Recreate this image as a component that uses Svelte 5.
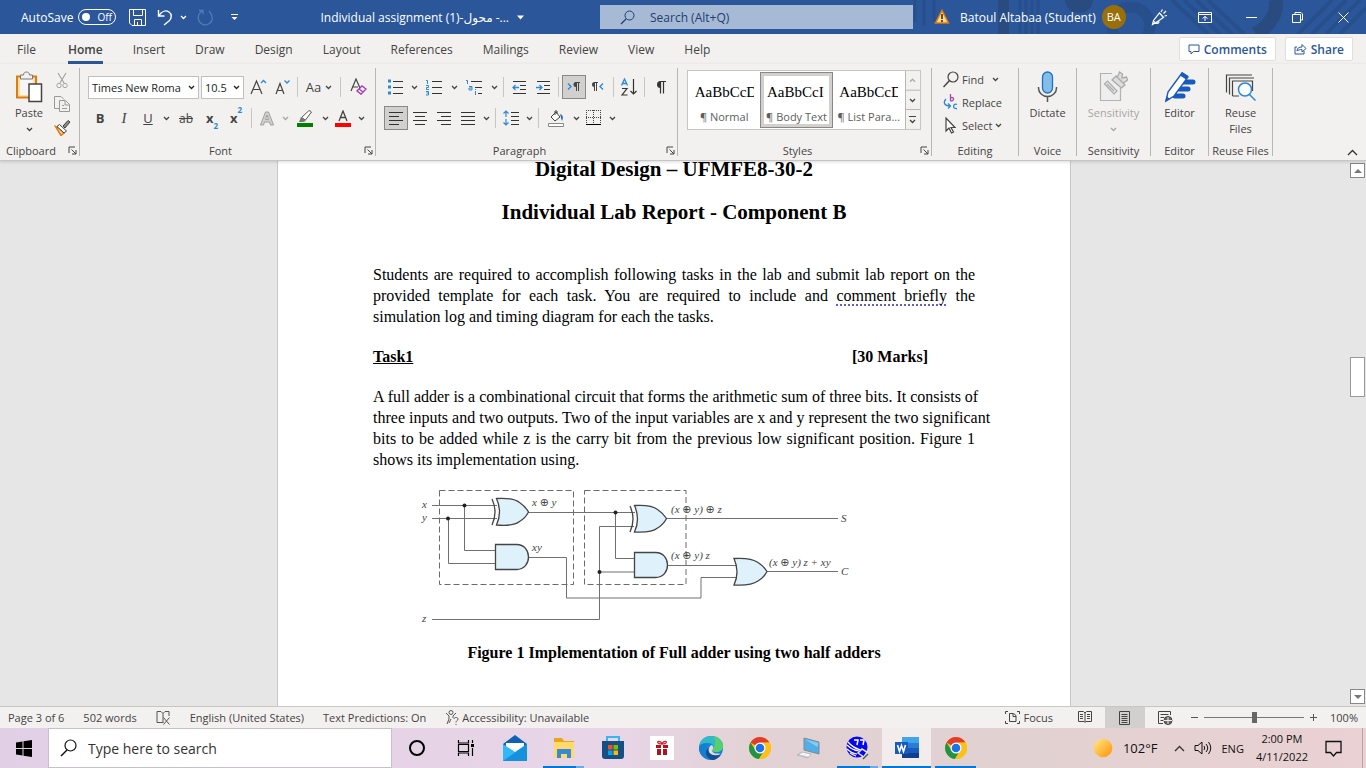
<script lang="ts">
  type Icon = { w: number; h: number; body: string };

  const bars = (rows: [number, number][], gap = 4) =>
    rows.map(([a, b], i) => `<path d="M${a} ${i * gap + 1.5}H${b}" stroke="#333"/>`).join('');

  const chromeBody =
    '<circle cx="12" cy="12" r="11" fill="#fbc116"/><path d="M12 12 2.5 6.5A11 11 0 0 1 21.5 6.5L12 7Z" fill="#e33b2e"/><path d="M12 12 7.7 14.5 2.5 6.5A11 11 0 0 0 11 23L16.3 14.5Z" fill="#229342"/><path d="M21.5 6.5A11 11 0 0 1 11 23L16.3 14.5 16 8 12 6.5Z" fill="#fbc116"/><circle cx="12" cy="12" r="5.5" fill="#fff"/><circle cx="12" cy="12" r="4.3" fill="#1a73e8"/>';

  const icons: Record<string, Icon> = {
    save: { w: 17, h: 17, body: '<path d="M.5.5h16v16H3l-2.500-2.500zM4.500.5v6h9v-6M5.500 16v-5.500h7V16M8.500 16v-3" stroke="#fff"/>' },
    undo: { w: 16, h: 17, body: '<path d="M1.5 1v6h6M2 6.500C5 2 9 1 12 3c3 2 3 6 0 9l-5 4" stroke="#fff" stroke-width="1.400"/>' },
    redo: { w: 17, h: 17, body: '<path d="M2 1.500h4v4M5.500 2C0 5 0 12 5 15c4 2 9 0 10-4 1-4-1-7-3-9" stroke="#6f93cc" stroke-width="1.300"/>' },
    more: { w: 9, h: 8, body: '<path d="M1 1.500h7" stroke="#fff"/><path d="M1.500 4h6l-3 3z" fill="#fff"/>' },
    tri: { w: 7, h: 5, body: '<path d="M0 .500h7l-3.500 4z" fill="#fff"/>' },
    warn: { w: 16, h: 16, body: '<path d="M8 1.500 14.500 14h-13z" fill="#ffd98a" stroke="#e07a10" stroke-width="1.500"/><path d="M8 5v5M8 11v2" stroke="#222" stroke-width="1.500"/>' },
    pen: { w: 17, h: 17, body: '<path d="m1.500 15.500 1-4L8.500 4l4 4.500-7.500 5zM3 12.500l2 2q3 0 3-2M10 3l1.500-2.500M12.500 4.500 15 2M13.500 7l2.500-.500" stroke="#fff" stroke-width="1.200"/>' },
    ribbonOpt: { w: 14, h: 11, body: '<path d="M.500.500h13v10H.500zM1 2.500h12M7 9V4.500M4.500 6.500 7 4.500l2.500 2" stroke="#fff"/>' },
    min: { w: 11, h: 11, body: '<path d="M0 5.500h11" stroke="#fff"/>' },
    restore: { w: 11, h: 11, body: '<path d="M.500 2.500h8v8h-8zM3 2.500v-2h6l1.500 1.500v6H9" stroke="#fff"/>' },
    close: { w: 11, h: 11, body: '<path d="m.500.500 10 10M10.500.500l-10 10" stroke="#fff"/>' },
    loupe: { w: 15, h: 15, body: '<circle cx="9.500" cy="5.500" r="4.500" stroke="#1e3f73"/><path d="M6 9 1 14" stroke="#1e3f73" stroke-width="1.300"/>' },
    comment: { w: 12, h: 11, body: '<path d="M1 1h10v6.500H5.500L3 10V7.500H1z" stroke="#2b579a"/>' },
    share: { w: 13, h: 12, body: '<path d="M3 4H1v7h9V8M3 8c0-3 2-4 5-4V1.500l4 4-4 3.500V6.500C6 6.500 4 7 3 8z" stroke="#2b579a"/>' },
    paste: { w: 28, h: 32, body: '<path d="M2 5.500h19v21H2z" fill="#fbe0a0" stroke="#e07b12" stroke-width="2"/><path d="M5 8h13v16H5z" fill="#f8f6f4"/><path d="M5.500 8V4h3c0-4 6-4 6 0h3v4z" fill="#f3f1ef" stroke="#777"/><path d="M14 13h12.500v17.500H14z" fill="#fff" stroke="#444" stroke-width="1.500"/>' },
    cut: { w: 12, h: 17, body: '<path d="m2 1 6 10M10 1 4 11" stroke="#a5a5a5" stroke-width="1.200"/><circle cx="3" cy="13.500" r="2.200" stroke="#a5a5a5"/><circle cx="9" cy="13.500" r="2.200" stroke="#a5a5a5"/>' },
    copy: { w: 17, h: 17, body: '<path d="M5 12.500H.500V.500H7l3 3M5.500 4.500h6l4 4v7h-10zM11 5v4h4M8 9.500h2M8 12.500h5" stroke="#999"/>' },
    painter: { w: 17, h: 16, body: '<path d="M1.500 6.500 5 8l5 5-3 2.500z" fill="#fbd08c" stroke="#e07b12" stroke-width="1.500"/><path d="m5.500 4.500 7 6.500-2.500 2-7-6.500z" fill="#fff" stroke="#444"/><path d="m9 6 5-5.500L16 2l-5 6z" fill="#888" stroke="#444"/>' },
    growFont: { w: 17, h: 16, body: '<path d="m1 15 5.500-13L12 15M3 10.500h7" stroke="#444" stroke-width="1.200"/><path d="m11 4 2.500-2.500L16 4" stroke="#2a8ad4" stroke-width="1.300"/>' },
    shrinkFont: { w: 17, h: 16, body: '<path d="m2 15 4-10.500L10 15M3.500 11.500h5" stroke="#444" stroke-width="1.200"/><path d="m10.500 1.500 2.500 2.500 2.500-2.500" stroke="#2a8ad4" stroke-width="1.300"/>' },
    clear: { w: 17, h: 18, body: '<path d="M1 13 6 1l4 9M3 9h5" stroke="#444" stroke-width="1.200"/><path d="m7 13 5-5 4 3-5 5zM9 11l4 3" fill="#fff" stroke="#a33ab4" stroke-width="1.400"/>' },
    effects: { w: 16, h: 15, body: '<path d="M1.500 14 6.500 1h3l5 13h-3l-1-3h-5l-1 3zM6.500 8.500h3L8 4z" fill="#d0d0d0" stroke="#a0a0a0"/>' },
    highlight: { w: 17, h: 17, body: '<path d="m4.500 7.500 7-6.500q1.500-1 3 1L8.500 10z" fill="#fff" stroke="#555"/><path d="m4 7 5 4-3 1H2z" fill="#777"/><path d="M0 13h16v4H0z" fill="#008000"/>' },
    fontColor: { w: 16, h: 17, body: '<path d="m4 11 4-10 4 10M5.500 7.500h5" stroke="#444" stroke-width="1.300"/><path d="M0 13h16v4H0z" fill="#f00"/>' },
    bullets: { w: 16, h: 16, body: '<path d="M0 .500h3v3H0zM0 6.500h3v3H0zM0 12.500h3v3H0z" fill="#2a8ad4"/><path d="M5 2.500h10M5 8.500h10M5 14.500h10" stroke="#333"/>' },
    numbers: { w: 16, h: 17, body: '<path d="M6 2.500h10M6 8.500h10M6 14.500h10" stroke="#333"/><path d="M0 1.500h1.500V5M0 6.500h2.500v2H.500v2H3M0 12.500h2.500v3.500H0M.500 14h2" stroke="#2a8ad4"/>' },
    levels: { w: 16, h: 17, body: '<path d="M5 2.500h11M9 8.500h7M12 14.500h4" stroke="#333"/><path d="M0 1.500h1.500V5M3 7.500h3v3.500H3V9h3M9.500 12v4M9.500 10v1" stroke="#2a8ad4"/>' },
    outdent: { w: 15, h: 14, body: '<path d="M1 1.500h13M8 5.500h6M8 9.500h6M1 13.500h13" stroke="#333"/><path d="M7 7.500H1M3.500 5 1 7.500 3.500 10" stroke="#2a8ad4" stroke-width="1.300"/>' },
    indent: { w: 15, h: 14, body: '<path d="M1 1.500h13M8 5.500h6M8 9.500h6M1 13.500h13" stroke="#333"/><path d="M0 7.500h6M3.500 5 6 7.500 3.500 10" stroke="#2a8ad4" stroke-width="1.300"/>' },
    ltr: { w: 14, h: 10, body: '<path d="m1 1.500 3 3-3 3" stroke="#2a8ad4" stroke-width="1.400"/><path d="M9.500 9V.500M11.500 9V.500M8 .500h5" stroke="#444"/><path d="M9 0a2.500 2.500 0 0 0 0 5z" fill="#444"/>' },
    rtl: { w: 14, h: 10, body: '<path d="m12 1.500-3 3 3 3" stroke="#2a8ad4" stroke-width="1.400"/><path d="M3.500 9V.500M5.500 9V.500M3 .500h4" stroke="#444"/><path d="M3.500 0a2.500 2.500 0 0 0 0 5z" fill="#444"/>' },
    sort: { w: 17, h: 18, body: '<path d="M.500 7.500 3.500 1l3 6.500M1.500 5.500h4" stroke="#2a8ad4" stroke-width="1.300"/><path d="M1 10.500h5l-5 6.500h5.500M12.500 1v15M9.500 13l3 3 3-3" stroke="#333" stroke-width="1.200"/>' },
    pilcrow: { w: 11, h: 13, body: '<path d="M5.500 12.500V.500M8.500 12.500V.500M5 .500h6" stroke="#333" stroke-width="1.200"/><path d="M5.500 0a3.500 3.500 0 0 0 0 7z" fill="#333"/>' },
    alignLeft: { w: 15, h: 14, body: bars([[0, 14], [0, 10], [0, 14], [0, 10]]) },
    alignCenter: { w: 15, h: 14, body: bars([[0, 14], [2, 12], [0, 14], [2, 12]]) },
    alignRight: { w: 15, h: 14, body: bars([[0, 14], [4, 14], [0, 14], [4, 14]]) },
    justify: { w: 15, h: 14, body: bars([[0, 14], [0, 14], [0, 14], [0, 14]]) },
    spacing: { w: 16, h: 16, body: '<path d="M8 2.500h8M8 6.500h8M8 10.500h8M8 14.500h8" stroke="#333"/><path d="M3 1v6M3 9v6M.500 3.500 3 1l2.500 2.500M.500 12.500 3 15l2.500-2.500" stroke="#2a8ad4" stroke-width="1.200"/>' },
    shading: { w: 17, h: 17, body: '<path d="m3 7 5-5 4 5-5 4zM7 5V1h2v3" fill="#fff" stroke="#444"/><path d="M12 4c4 1 3 5 2 7-1-2-1-4-2-7z" fill="#2b6cb0"/><path d="M.500 13.500h15v3H.500z" fill="#fff" stroke="#888"/>' },
    borders: { w: 16, h: 16, body: '<path d="M.500 0v14M7.500 0v14M14.500 0v14M0 .500h15M0 7.500h15" stroke="#444" stroke-dasharray="1 1"/><path d="M0 14.500h15" stroke="#000"/>' },
    find: { w: 16, h: 17, body: '<circle cx="10" cy="6" r="5" stroke="#444" stroke-width="1.200"/><path d="M6.500 9.500.500 16" stroke="#444" stroke-width="1.500"/>' },
    replace: { w: 16, h: 17, body: '<path d="M7.500 0v7M7.500 4c3-2 5 3 0 3" stroke="#a846b8" stroke-width="1.300"/><path d="M14 10.500c-4-2-5 5 0 4M3 5C0 8 1 12 7 12M5 9.500 7.500 12 5 14.500" stroke="#2a8ad4" stroke-width="1.300"/>' },
    select: { w: 16, h: 17, body: '<path d="M3 1v13l3-3 2.500 5 2-1L8 10.500h4z" fill="#fff" stroke="#444" stroke-width="1.200"/>' },
    mic: { w: 21, h: 32, body: '<rect x="5.500" y="1" width="10" height="21" rx="5" fill="#83bdea" stroke="#2072bd" stroke-width="1.300"/><path d="M1.500 16v1a9 8.500 0 0 0 18 0v-1M10.500 25.500V31" stroke="#555" stroke-width="1.500"/>' },
    sensitivity: { w: 29, h: 32, body: '<path d="M13 2.500H1.500v27h20V17" fill="#eee" stroke="#b3b3b3" stroke-width="1.200"/><path d="m5.500 13 3-3 9.500 10-3 3zM8 13l7 7" fill="#e8e8e8" stroke="#aaa" stroke-width="1.200"/><path d="m13 9 4-4 9 9-3.500 3zM16 6l3-1 1.500-4 3 2-.500 4 4.500-1 1 3-4 3" fill="#ddd" stroke="#aaa" stroke-width="1.300"/>' },
    editor: { w: 32, h: 32, body: '<path d="M17 11h12M15 18h9M11 25h8" stroke="#185abd" stroke-width="5" stroke-linecap="round"/><path d="M2 30 4 21 18 2l6 4-14 19z" fill="#fff" stroke="#185abd" stroke-width="1.400"/><path d="m18 1 6.500 4-2.500 3.500-6-4zM1 31l1.500-6 3.500 3z" fill="#185abd"/>' },
    reuse: { w: 31, h: 29, body: '<path d="M1.500 20V2.500H27M4.500 22V5.500H29M7.500 23.500v-15h20v10M7.500 23.500H14" stroke="#444" stroke-width="1.200"/><circle cx="20" cy="17" r="6.500" fill="#fff" stroke="#2a8ad4" stroke-width="1.500"/><path d="m24.500 22 6 6" stroke="#2a8ad4" stroke-width="1.500"/>' },
    launcher: { w: 9, h: 9, body: '<path d="M1 7V1h6M3.500 3.500 8 8M8 4v4H4" stroke="#444"/>' },
    collapse: { w: 11, h: 7, body: '<path d="m1 6 4.500-4.500L10 6" stroke="#333" stroke-width="1.300"/>' },
    proof: { w: 15, h: 15, body: '<path d="M7 12.500H1v-11h4l2 2V13M7 3.500l2-2h4V6" stroke="#555"/><path d="m7.500 7.500 6 7M13.500 7.500l-6 7" stroke="#555"/>' },
    access: { w: 14, h: 15, body: '<circle cx="6" cy="2.500" r="2" stroke="#555"/><path d="m1 3 3 3v3l-2 5M11 3 8 6v2M4 13l2-4M9 9c0-2 4-2 4 0 0 1.500-2 1.500-2 3.500M11 14v1" stroke="#555"/>' },
    focus: { w: 15, h: 13, body: '<path d="M3 .500H.500V3M.500 10v2.500H3M12 .500h2.500V3M14.500 10v2.500H12M4.500 2.500h4l2.500 2v6H4.500zM8 3v2.500h3" stroke="#444"/>' },
    read: { w: 14, h: 13, body: '<path d="M7 2 5.500.500h-5v10H6l1 1 1-1h5.500V.500h-5zM7 2v9M2 3.500h3M2 5.500h3M2 7.500h3M9 3.500h3M9 5.500h3M9 7.500h3" stroke="#444"/>' },
    print: { w: 12, h: 14, body: '<path d="M.500.500h10v13H.500zM2.500 3.500h6M2.500 5.500h6M2.500 7.500h6M2.500 9.500h6M2.500 11.500h6" stroke="#444"/>' },
    web: { w: 15, h: 14, body: '<path d="M5 12.500H.500V.500h12V4M2.500 3.500h8M2.500 6.500H6M2.500 9.500H5" stroke="#444"/><circle cx="10" cy="9.500" r="4" fill="#666" stroke="#444"/><path d="M6 9.500h8M10 6v7" stroke="#f3f1ef"/>' },
    start: { w: 16, h: 17, body: '<path d="m0 2.500 6.500-1V8H0zM7.500 1.300 16 0v8H7.500zM0 9h6.500v6.500L0 14.500zM7.500 9H16v8l-8.500-1.300z" fill="#000"/>' },
    taskSearch: { w: 17, h: 18, body: '<circle cx="10.500" cy="6.500" r="5.500" stroke="#111" stroke-width="1.200"/><path d="M7 11 1 17" stroke="#111" stroke-width="1.500"/>' },
    cortana: { w: 18, h: 18, body: '<circle cx="9" cy="9" r="7" stroke="#000" stroke-width="2"/>' },
    taskView: { w: 18, h: 18, body: '<path d="M1.500 1v3h10V1M1.500 5.500h10v7h-10zM1.500 17v-3h10v3M15.500 1v3M15.500 9v8" stroke="#000" stroke-width="1.200"/><path d="M14 5h3v3h-3z" fill="#000"/>' },
    mail: { w: 24, h: 26, body: '<path d="M0 9 12 0l12 9v16H0z" fill="#0e62b5"/><path d="M3 8h18v9H3z" fill="#fff"/><path d="m0 9 12 8L24 9v17H0z" fill="#31b8f5"/><path d="M24 9v17H0z" fill="#1591de"/>' },
    explorer: { w: 22, h: 22, body: '<path d="M1 1h8l2 3h10v17H1z" fill="#e8a71b"/><path d="M1 5h20v16H1z" fill="#ffd969"/><path d="M4 21v-9h14v9h-4v-4H8v4z" fill="#378ad4"/>' },
    store: { w: 24, h: 24, body: '<path d="M6 5V1h12v4" stroke="#36b8ee" stroke-width="2"/><path d="M1 5h22v15q0 3-3 3H4q-3 0-3-3z" fill="#154f83"/><path d="M7 9h4.500v4.500H7z" fill="#f25022"/><path d="M12.500 9H17v4.500h-4.500z" fill="#7fba00"/><path d="M7 14.500h4.500V19H7z" fill="#00a4ef"/><path d="M12.500 14.500H17V19h-4.500z" fill="#ffb900"/>' },
    gift: { w: 24, h: 24, body: '<path d="M0 0h24v24H0z" fill="#fff"/><path d="M6 9h5v3H6zM13 9h5v3h-5zM7 13h4v6H7zM13 13h4v6h-4z" fill="#b4121b"/><path d="M12 8c-4 0-5-2-4-2.500s3 0 4 2.500c1-2.500 3-3 4-2.500s0 2.500-4 2.500z" stroke="#d1232a" stroke-width="1.200"/>' },
    edge: { w: 24, h: 24, body: '<circle cx="12" cy="12" r="12" fill="#1584d5"/><path d="M0 11C1 3 7 0 12 0c8 0 12 5 12 10 0 4-3 6-7 6-3 0-4-1-3-3 2-3-1-6-5-6-5 0-8 2-9 4z" fill="#32b9c6"/><path d="M15 .500C21 2 24 6 24 10c0 4-3 6-7 6-3 0-4-1-3-3 3-5 3-9 1-12.500z" fill="#55cf70"/><path d="M9 8c-5 4-3 14 5 16-8 0-14-5-14-12 1-5 6-5 9-4z" fill="#167ed0"/><path d="M10 12c-2 5 4 9 12 6-2 4-6 6-9 6-7-3-8-10-3-12z" fill="#124e91"/><path d="M14 13c-2 3 1 5 5 4.500L22 18c-7 3-14 0-12-6q1-3 3-3 2 2 1 4z" fill="#e6d7d8"/>' },
    chrome: { w: 24, h: 24, body: chromeBody },
    computer: { w: 24, h: 24, body: '<path d="m7 2 15 4v12L7 14z" fill="#51aee8" stroke="#7e8990"/><path d="m7.500 3 14 4-1 4z" fill="#83ccf5"/><path d="m5 16 9 2-3 4-11-3z" fill="#ced2d4" stroke="#b3b8bb"/><path d="m3 18 9 2M5 17l8 2" stroke="#fff"/>' },
    globe: { w: 24, h: 24, body: '<circle cx="11" cy="11" r="10.500" fill="#0808ef"/><path d="M1 9q5 5 12 6M2 6q5 6 13 8M1 13q4 4 10 5M4 17q3 2 6 3" stroke="#fff" stroke-width="1.200"/><path d="M8 4h4l-1 5M14 4h4l-1 5" stroke="#fff" stroke-width="1.500"/><path d="m12 17 4-4 5 3-3 5z" fill="#0808ef" stroke="#e5e5e5" stroke-width="1.500"/><path d="m17 23 5-5" stroke="#555" stroke-width="1.500"/>' },
    word: { w: 24, h: 24, body: '<path d="M7 1h17v6H7z" fill="#41a5ee"/><path d="M7 7h17v5H7z" fill="#2b7cd3"/><path d="M7 12h17v5H7z" fill="#185abd"/><path d="M7 17h17v5H7z" fill="#103f91"/><path d="M0 6h13v12H0z" fill="#185abd"/><path d="m2.500 9 2 6.500L6.500 9.500l2 6L10.500 9" stroke="#fff" stroke-width="1.600"/>' },
    sun: { w: 20, h: 20, body: '<defs><linearGradient id="sun" x1="0" y1="0" x2="1" y2="1"><stop offset=".1" stop-color="#ffe27a"/><stop offset="1" stop-color="#ff9100"/></linearGradient></defs><circle cx="10" cy="10" r="9.300" fill="url(#sun)"/>' },
    speaker: { w: 18, h: 14, body: '<path d="M1 4.500h3l4-3.500v12L4 9.500H1zM10 5q1.500 2 0 4M12 3q3.500 4 0 8M14.500 1q4.500 6 0 12" stroke="#111"/>' },
    notice: { w: 17, h: 17, body: '<path d="M1 1.500h15v11h-4.500L8.500 16l-3-3.500H1z" stroke="#111" stroke-width="1.300"/>' }
  };

  const tabs = ['File', 'Home', 'Insert', 'Draw', 'Design', 'Layout', 'References', 'Mailings', 'Review', 'View', 'Help'];
  const windowButtons = [
    { icon: 'pen', label: 'Coming soon' },
    { icon: 'ribbonOpt', label: 'Ribbon display options' },
    { icon: 'min', label: 'Minimize' },
    { icon: 'restore', label: 'Restore' },
    { icon: 'close', label: 'Close' }
  ];
  const styleCards = [
    { name: 'Normal', sample: 'AaBbCcD' },
    { name: 'Body Text', sample: 'AaBbCcI' },
    { name: 'List Para...', sample: 'AaBbCcD' }
  ];
  const pinned = [
    { icon: 'cortana', label: 'Cortana', run: '' },
    { icon: 'taskView', label: 'Task View', run: '' },
    { icon: 'mail', label: 'Mail', run: '' },
    { icon: 'explorer', label: 'File Explorer', run: 'running many' },
    { icon: 'store', label: 'Microsoft Store', run: '' },
    { icon: 'gift', label: 'Rewards', run: '' },
    { icon: 'edge', label: 'Edge', run: '' },
    { icon: 'chrome', label: 'Chrome', run: '' },
    { icon: 'computer', label: 'Remote PC', run: '' },
    { icon: 'globe', label: 'Quartus', run: 'running many' },
    { icon: 'word', label: 'Word', run: 'running current' },
    { icon: 'chrome', label: 'Chrome window', run: 'running' }
  ];

  const body = [
    'A full adder is a combinational circuit that forms the arithmetic sum of three bits. It consists of',
    'three inputs and two outputs. Two of the input variables are x and y represent the two significant',
    'bits to be added while z is the carry bit from the previous low significant position. Figure 1',
    'shows its implementation using.'
  ];

  let activeTab = $state('Home');
  let activeStyle = $state('Body Text');
  let zoom = $state(50);
</script>

{#snippet icon(name: string)}
  <svg class="icon" width={icons[name].w} height={icons[name].h} viewBox="0 0 {icons[name].w} {icons[name].h}" fill="none" aria-hidden="true">
    {@html icons[name].body}
  </svg>
{/snippet}

{#snippet chev()}
  <svg class="icon" width="7" height="5" viewBox="0 0 7 5" fill="none" aria-hidden="true">
    <path d="m1 1 2.500 2.500L6 1" stroke="currentColor" stroke-width="1.300" />
  </svg>
{/snippet}

{#snippet tool(name: string, label: string, cls = '')}
  <button type="button" class="tool {cls}" aria-label={label}>{@render icon(name)}</button>
{/snippet}

{#snippet drop(label: string, cls = '')}
  <button type="button" class="tool drop {cls}" aria-label="{label} options">{@render chev()}</button>
{/snippet}

{#snippet groupLabel(name: string, launch = false)}
  <div class="group-label" class:launchable={launch}>
    <span>{name}</span>
    {#if launch}
      <button type="button" class="launch" aria-label="{name} settings">{@render icon('launcher')}</button>
    {/if}
  </div>
{/snippet}

<div class="desktop">
  <header class="titlebar">
    <svg class="swirl" width="456" height="34" viewBox="910 0 456 34" fill="none" aria-hidden="true">
      <path d="M915 0v22M924 0v26M934 0v22M1020 0v34M1026 0v34M1032 0v34M1038 0v34" stroke="#264f8c" stroke-width="3" />
      <path d="M998 0h11v34h-11z" fill="#294b80" />
      <circle cx="1079" cy="-1" r="14" fill="#294b80" />
      <circle cx="1131" cy="26" r="19" stroke="#264f8c" stroke-width="11" />
      <path d="m1172 0 36 34M1184 0l36 34M1196 0l36 34M1208 0l36 34" stroke="#264f8c" stroke-width="4" />
      <path d="M1276 0q2 20-20 34" stroke="#294b80" stroke-width="14" />
      <path d="m1312 34 34-34M1326 34l34-34M1340 34l26-26M1298 34l34-34" stroke="#264f8c" stroke-width="4" />
    </svg>
    <div class="title-left">
      <span class="autosave">AutoSave</span>
      <button type="button" class="toggle" role="switch" aria-checked="false" aria-label="AutoSave"><i></i>Off</button>
      <div class="quick">
        {@render tool('save', 'Save')}
        {@render tool('undo', 'Undo')}
        {@render drop('Undo')}
        {@render tool('redo', 'Redo', 'dim')}
        {@render tool('more', 'Customize Quick Access Toolbar')}
      </div>
      <button type="button" class="doc-name"><span>Individual assignment (1)-<bdi>محول</bdi> -...</span>{@render icon('tri')}</button>
    </div>
    <label class="search">
      {@render icon('loupe')}
      <input type="text" placeholder="Search (Alt+Q)" aria-label="Search" />
    </label>
    <div class="title-right">
      {@render icon('warn')}
      <span class="account">Batoul Altabaa (Student)</span>
      <span class="avatar">BA</span>
      <div class="window-buttons">
        {#each windowButtons as b (b.icon)}
          {@render tool(b.icon, b.label)}
        {/each}
      </div>
    </div>
  </header>

  <nav class="tabs">
    {#each tabs as tab (tab)}
      <button type="button" class="tab" class:active={tab === activeTab} onclick={() => (activeTab = tab)}>{tab}</button>
    {/each}
    <div class="tab-actions">
      <button type="button" class="action">{@render icon('comment')} Comments</button>
      <button type="button" class="action">{@render icon('share')} Share</button>
    </div>
  </nav>

  <section class="ribbon">
    <div class="group">
      <div class="group-body clipboard">
        <button type="button" class="big">{@render icon('paste')}<span>Paste</span>{@render chev()}</button>
        <div class="stack">
          {@render tool('cut', 'Cut')}
          {@render tool('copy', 'Copy')}
          {@render tool('painter', 'Format Painter')}
        </div>
      </div>
      {@render groupLabel('Clipboard', true)}
    </div>

    <div class="group">
      <div class="group-body rows">
        <div class="row">
          <div class="combo family">
            <select aria-label="Font"><option>Times New Roma</option></select>{@render chev()}
          </div>
          <div class="combo size">
            <select aria-label="Font size"><option>10.5</option></select>{@render chev()}
          </div>
          {@render tool('growFont', 'Increase font size')}
          {@render tool('shrinkFont', 'Decrease font size')}
          <i class="sep"></i>
          <button type="button" class="tool case">Aa {@render chev()}</button>
          <i class="sep"></i>
          {@render tool('clear', 'Clear formatting', 'wide')}
        </div>
        <div class="row">
          <button type="button" class="tool bold">B</button>
          <button type="button" class="tool italic">I</button>
          <button type="button" class="tool under">U</button>
          {@render drop('Underline')}
          <button type="button" class="tool strike wide">ab</button>
          <button type="button" class="tool bold">x<sub>2</sub></button>
          <button type="button" class="tool bold">x<sup>2</sup></button>
          <i class="sep"></i>
          {@render tool('effects', 'Text effects')}
          {@render drop('Text effects', 'faint')}
          {@render tool('highlight', 'Highlight', 'wide')}
          {@render drop('Highlight')}
          {@render tool('fontColor', 'Font color')}
          {@render drop('Font color')}
        </div>
      </div>
      {@render groupLabel('Font', true)}
    </div>

    <div class="group">
      <div class="group-body rows">
        <div class="row">
          {@render tool('bullets', 'Bullets')}
          {@render drop('Bullets')}
          {@render tool('numbers', 'Numbering', 'wide')}
          {@render drop('Numbering')}
          {@render tool('levels', 'Multilevel list', 'wide')}
          {@render drop('Multilevel list')}
          <i class="sep"></i>
          {@render tool('outdent', 'Decrease indent')}
          {@render tool('indent', 'Increase indent')}
          <i class="sep"></i>
          {@render tool('ltr', 'Left to right', 'on')}
          {@render tool('rtl', 'Right to left')}
          <i class="sep"></i>
          {@render tool('sort', 'Sort')}
          <i class="sep"></i>
          {@render tool('pilcrow', 'Show marks')}
        </div>
        <div class="row">
          {@render tool('alignLeft', 'Align left', 'on')}
          {@render tool('alignCenter', 'Center')}
          {@render tool('alignRight', 'Align right')}
          {@render tool('justify', 'Justify')}
          {@render drop('Justify')}
          <i class="sep"></i>
          {@render tool('spacing', 'Line spacing')}
          {@render drop('Line spacing')}
          <i class="sep"></i>
          {@render tool('shading', 'Shading', 'wide')}
          {@render drop('Shading')}
          {@render tool('borders', 'Borders')}
          {@render drop('Borders')}
        </div>
      </div>
      {@render groupLabel('Paragraph', true)}
    </div>

    <div class="group">
      <div class="group-body">
        <div class="gallery">
          {#each styleCards as card (card.name)}
            <button type="button" class="card" class:chosen={card.name === activeStyle} onclick={() => (activeStyle = card.name)}>
              <span class="sample">{card.sample}</span>
              <span>¶ {card.name}</span>
            </button>
          {/each}
          <div class="gallery-scroll">
            <button type="button" class="up" aria-label="Previous styles">{@render chev()}</button>
            <button type="button" aria-label="Next styles">{@render chev()}</button>
            <button type="button" class="all" aria-label="All styles">{@render chev()}</button>
          </div>
        </div>
      </div>
      {@render groupLabel('Styles', true)}
    </div>

    <div class="group">
      <div class="group-body editing">
        <button type="button">{@render icon('find')} Find <em>{@render chev()}</em></button>
        <button type="button">{@render icon('replace')} Replace</button>
        <button type="button">{@render icon('select')} Select {@render chev()}</button>
      </div>
      {@render groupLabel('Editing')}
    </div>

    <div class="group">
      <div class="group-body"><button type="button" class="big">{@render icon('mic')}<span>Dictate</span></button></div>
      {@render groupLabel('Voice')}
    </div>
    <div class="group">
      <div class="group-body">
        <button type="button" class="big faint">{@render icon('sensitivity')}<span>Sensitivity</span>{@render chev()}</button>
      </div>
      {@render groupLabel('Sensitivity')}
    </div>
    <div class="group">
      <div class="group-body"><button type="button" class="big">{@render icon('editor')}<span>Editor</span></button></div>
      {@render groupLabel('Editor')}
    </div>
    <div class="group">
      <div class="group-body"><button type="button" class="big">{@render icon('reuse')}<span>Reuse<br />Files</span></button></div>
      {@render groupLabel('Reuse Files')}
    </div>
    <button type="button" class="collapse" aria-label="Collapse the ribbon">{@render icon('collapse')}</button>
  </section>

  <main class="workspace">
    <div class="canvas">
      <article class="page">
        <h1>Digital Design – UFMFE8-30-2</h1>
        <h1>Individual Lab Report - Component B</h1>
        <p class="intro">
          <span class="line full">Students are required to accomplish following tasks in the lab and submit lab report on the</span>
          <span class="line full">provided template for each task. You are required to include and <u class="grammar">comment briefly</u> the</span>
          <span class="line">simulation log and timing diagram for each the tasks.</span>
        </p>
        <div class="task"><u>Task1</u><span>[30 Marks]</span></div>
        <p>
          {#each body as line, i}
            <span class="line" class:full={i < 3}>{line}</span>
          {/each}
        </p>
        <figure>
          <svg class="circuit" width="440" height="140" viewBox="415 487 440 140" fill="none" role="img" aria-label="Full adder circuit">
            <g stroke="#6b6b6b" stroke-dasharray="6 3">
              <path d="M439.500 491.500h134v94h-134z" />
              <path d="M584.500 491.500h101.500v94h-101.500z" />
            </g>
            <g stroke="#707070">
              <path d="M432 506.500h65M432 519.500h65M464.500 506v45.500H496M448.500 519v45.500H496" />
              <path d="M528 513.500h107M529 558.500h37.500v40.500H701v-20.500h36" />
              <path d="M615.500 513v46.500H635M432 620.500h167.500v-93H634M599.500 573H635" />
              <path d="M667 519.500h171M668 566.500h68M767 572.500h71" />
            </g>
            <g fill="#222">
              <circle cx="464.500" cy="506.500" r="2" />
              <circle cx="448" cy="519.500" r="2" />
              <circle cx="615.500" cy="513.500" r="2" />
              <circle cx="599.500" cy="573" r="2" />
            </g>
            <g fill="#dff1fb" stroke="#444" stroke-width="1.300">
              <path d="M496.500 499.500q17-1 23 4 6 4 9 9.500-3 6-9 9.500-6 5-23 3.500 6-13 0-26.500z" />
              <path d="M634.500 506.500q17-1 23 4 6 4 9 9-3 6-9 9.500-6 5-23 4 6-13 0-26.500z" />
              <path d="M734 559.500q17-1 24 4 6 4 9 9-3 6-9 9.500-7 5-24 4 6-13 0-26.500z" />
              <path d="M495.500 545.500h21c16 0 16 25 0 25h-21z" />
              <path d="M634.500 553.500h21c16 0 16 25 0 25h-21z" />
              <path d="M492 500q6 13 0 26M630 507q6 13 0 26" fill="none" />
            </g>
            <g class="signals">
              <text x="422" y="509">x</text>
              <text x="422" y="522">y</text>
              <text x="422" y="623">z</text>
              <text x="532" y="507">x <tspan>⊕</tspan> y</text>
              <text x="532" y="552">xy</text>
              <text x="671" y="514">(x <tspan>⊕</tspan> y) <tspan>⊕</tspan> z</text>
              <text x="671" y="560">(x <tspan>⊕</tspan> y) z</text>
              <text x="769" y="567">(x <tspan>⊕</tspan> y) z + xy</text>
              <text x="841" y="523">S</text>
              <text x="841" y="576">C</text>
            </g>
          </svg>
          <figcaption>Figure 1 Implementation of Full adder using two half adders</figcaption>
        </figure>
      </article>
    </div>
    <div class="scrollbar">
      <button type="button" aria-label="Scroll up"><i class="arrow"></i></button>
      <div class="track"><i class="thumb"></i></div>
      <button type="button" aria-label="Scroll down"><i class="arrow down"></i></button>
    </div>
  </main>

  <footer class="status">
    <span>Page 3 of 6</span>
    <span>502 words</span>
    {@render icon('proof')}
    <span>English (United States)</span>
    <span>Text Predictions: On</span>
    <span class="with-icon">{@render icon('access')} Accessibility: Unavailable</span>
    <div class="views">
      <button type="button" class="focus">{@render icon('focus')} Focus</button>
      {@render tool('read', 'Read mode', 'view')}
      {@render tool('print', 'Print layout', 'view picked')}
      {@render tool('web', 'Web layout', 'view')}
      <button type="button" class="step" aria-label="Zoom out"><i></i></button>
      <input type="range" min="0" max="100" bind:value={zoom} aria-label="Zoom" />
      <button type="button" class="step plus" aria-label="Zoom in"><i></i></button>
      <span class="percent">100%</span>
    </div>
  </footer>

  <footer class="taskbar">
    <button type="button" class="start" aria-label="Start">{@render icon('start')}</button>
    <label class="task-search">
      {@render icon('taskSearch')}
      <input type="text" placeholder="Type here to search" aria-label="Type here to search" />
    </label>
    {#each pinned as app (app.label)}
      <button type="button" class="pin {app.run}" aria-label={app.label}>{@render icon(app.icon)}</button>
    {/each}
    <div class="tray">
      <span class="weather">{@render icon('sun')} 102°F</span>
      {@render icon('collapse')}
      {@render icon('speaker')}
      <span>ENG</span>
      <time>2:00 PM<br />4/11/2022</time>
      {@render icon('notice')}
      <i class="peek"></i>
    </div>
  </footer>
</div>

<style>
  :global(body) {
    background: #e6e6e6;
  }

  .desktop {
    display: flex;
    flex-direction: column;
    height: 100vh;
    overflow: hidden;
    font-family: 'Open Sans', 'Noto Sans', 'DejaVu Sans', sans-serif;
    font-size: 12px;
    color: #444;
  }

  button,
  input,
  select {
    font: inherit;
    color: inherit;
    background: none;
    border: 0;
    padding: 0;
    margin: 0;
  }

  i,
  em {
    font-style: normal;
  }

  .icon {
    display: block;
    flex: none;
  }

  .tool {
    display: inline-flex;
    align-items: center;
    justify-content: center;
    flex: none;
    width: 24px;
    height: 24px;
    box-sizing: border-box;
  }

  .tool.drop {
    width: 12px;
  }

  .tool.wide {
    width: 28px;
  }

  .tool.on {
    background: #d2d0ce;
    border: 1px solid #8a8886;
  }

  .faint {
    color: #a6a6a6;
  }

  /* title bar */
  .titlebar {
    position: relative;
    display: grid;
    grid-template-columns: 600fr 313fr 453fr;
    align-items: center;
    height: 34px;
    flex: none;
    background: #2b579a;
    color: #fff;
  }

  .swirl {
    position: absolute;
    right: 0;
    top: 0;
  }

  .title-left,
  .title-right {
    position: relative;
    display: flex;
    align-items: center;
  }

  .title-left {
    padding-left: 21px;
  }

  .toggle {
    display: flex;
    align-items: center;
    gap: 7px;
    width: 38px;
    height: 16px;
    margin-left: 5px;
    padding-left: 3px;
    box-sizing: border-box;
    border: 1px solid #fff;
    border-radius: 8px;
    font-size: 10px;
  }

  .toggle i {
    width: 8px;
    height: 8px;
    border-radius: 50%;
    background: #fff;
  }

  .quick {
    display: flex;
    align-items: center;
    padding-left: 9px;
  }

  .quick .tool:nth-child(2) {
    margin-left: 4px;
  }

  .quick .tool:last-child {
    margin-left: 5px;
  }

  .dim {
    opacity: 0.6;
    margin-left: 4px;
  }

  .doc-name {
    display: flex;
    align-items: center;
    gap: 8px;
    margin-left: 74px;
    white-space: nowrap;
  }

  .search {
    display: flex;
    align-items: center;
    gap: 15px;
    height: 24px;
    padding-left: 20px;
    background: #a6b9d5;
    color: #1e3f73;
  }

  .search input {
    flex: 1;
    min-width: 0;
  }

  .search input::placeholder {
    color: #1e3f73;
    opacity: 1;
  }

  .title-right {
    padding-left: 21px;
    gap: 6px;
  }

  .account {
    margin-left: 4px;
    white-space: nowrap;
  }

  .avatar {
    width: 24px;
    height: 24px;
    border-radius: 50%;
    background: #986f0b;
    font-size: 11px;
    line-height: 24px;
    text-align: center;
  }

  .window-buttons {
    display: flex;
    gap: 22px;
    margin-left: auto;
    padding-right: 11px;
  }

  /* tabs */
  .tabs {
    display: flex;
    align-items: center;
    gap: 30px;
    height: 30px;
    flex: none;
    padding: 0 13px 0 17px;
    background: #f3f1ef;
  }

  .tab {
    height: 30px;
    box-sizing: border-box;
    border-top: 3px solid transparent;
    border-bottom: 3px solid transparent;
  }

  .tab:first-child {
    margin-right: 2px;
  }

  .tab.active {
    font-weight: 600;
    border-bottom-color: #2b579a;
  }

  .tab-actions {
    display: flex;
    gap: 9px;
    margin-left: auto;
  }

  .action {
    display: flex;
    align-items: center;
    gap: 4px;
    height: 24px;
    padding: 0 8px;
    background: #fff;
    border: 1px solid #e1dfdd;
    border-radius: 2px;
    color: #2b579a;
    font-weight: 600;
  }

  /* ribbon */
  .ribbon {
    position: relative;
    z-index: 1;
    display: grid;
    grid-template-columns: 80px 296px 302px 254px 87px 58px 74px 58px 64px 1fr;
    height: 97px;
    box-sizing: border-box;
    flex: none;
    background: #f3f1ef;
    border-bottom: 1px solid #c8c6c4;
    box-shadow: 0 1px 3px rgba(0, 0, 0, 0.15);
    font-size: 11px;
  }

  .group {
    display: flex;
    flex-direction: column;
    margin: 4px 0;
    border-right: 1px solid #b9b7b5;
    min-width: 0;
  }

  .group-body {
    flex: 1;
  }

  .group-label {
    display: flex;
    align-items: center;
    justify-content: center;
    height: 12px;
    white-space: nowrap;
    position: relative;
  }

  .launchable {
    padding-right: 14px;
  }

  .launch {
    position: absolute;
    right: 2px;
    top: 2px;
  }

  .group:first-child .group-label {
    justify-content: flex-start;
    padding-left: 6px;
  }

  .clipboard {
    display: flex;
  }

  .clipboard .big {
    width: 46px;
    margin-left: 6px;
  }

  .stack {
    display: flex;
    flex-direction: column;
  }

  .stack .tool {
    width: 20px;
  }

  .big {
    display: flex;
    flex-direction: column;
    align-items: center;
    gap: 2px;
    width: 100%;
    padding-top: 3px;
    line-height: 16px;
  }

  .big span {
    margin-bottom: 4px;
  }

  .big .icon:first-child {
    height: 32px;
  }

  .rows {
    display: flex;
    flex-direction: column;
    gap: 7px;
    padding: 7px 0 0 8px;
  }

  .row {
    display: flex;
    align-items: center;
    height: 24px;
  }

  .sep {
    width: 1px;
    height: 20px;
    margin: 0 3px;
    background: #c8c6c4;
  }

  .combo {
    position: relative;
    display: flex;
    flex: none;
    align-items: center;
    height: 23px;
    box-sizing: border-box;
    margin-right: 2px;
    border: 1px solid #c2c0be;
    background: #fff;
    color: #222;
  }

  .combo select {
    appearance: none;
    width: 100%;
    height: 100%;
    padding: 0 14px 0 3px;
    outline: 0;
  }

  .combo .icon {
    position: absolute;
    right: 3px;
    pointer-events: none;
  }

  .family {
    width: 111px;
  }

  .size {
    width: 43px;
  }

  .case {
    width: 36px;
    gap: 4px;
    font-size: 13px;
  }

  .bold {
    font-weight: 700;
    font-size: 13px;
  }

  .bold sub,
  .bold sup {
    font-size: 8px;
    line-height: 8px;
    color: #2a8ad4;
  }

  .bold sub {
    align-self: flex-end;
  }

  .bold sup {
    align-self: flex-start;
  }

  .italic {
    font-family: 'Liberation Serif', serif;
    font-style: italic;
    font-size: 15px;
  }

  .under {
    font-size: 13px;
    text-decoration: underline;
  }

  .strike {
    font-size: 12px;
    text-decoration: line-through;
  }

  .gallery {
    display: flex;
    height: 60px;
    margin: 2px 10px 0 9px;
    box-sizing: border-box;
    border: 1px solid #c8c6c4;
    background: #fff;
  }

  .card {
    flex: 1;
    display: flex;
    flex-direction: column;
    align-items: center;
    justify-content: center;
    gap: 7px;
    min-width: 0;
    margin: 1px 0;
    border: 1px solid transparent;
    padding-top: 5px;
    white-space: nowrap;
    color: #605e5c;
    line-height: 15px;
  }

  .card.chosen {
    border-color: #8a8886;
    box-shadow: inset 0 0 0 3px #d2d0ce;
  }

  .sample {
    width: 59px;
    overflow: hidden;
    font-family: 'Liberation Serif', serif;
    font-size: 15px;
    line-height: 20px;
    color: #000;
    text-align: left;
  }

  .gallery-scroll {
    display: flex;
    flex-direction: column;
    width: 15px;
    background: #f3f1ef;
  }

  .gallery-scroll button {
    flex: 1;
    display: flex;
    align-items: center;
    justify-content: center;
    border: 1px solid #b9b7b5;
    border-width: 0 0 1px 1px;
  }

  .gallery-scroll .up {
    color: #aaa;
    transform: rotate(180deg);
    border-width: 1px 1px 0 0;
  }

  .gallery-scroll .all {
    border-bottom: 0;
  }

  .gallery-scroll .all .icon {
    padding-top: 2px;
    border-top: 1px solid #444;
  }

  .editing {
    display: flex;
    flex-direction: column;
    padding-left: 11px;
  }

  .editing button {
    display: flex;
    align-items: center;
    gap: 3px;
    height: 23px;
  }

  .editing em {
    margin-left: 5px;
  }

  .collapse {
    align-self: end;
    justify-self: end;
    padding: 0 8px 4px 0;
  }

  /* document */
  .workspace {
    display: flex;
    flex: 1;
    min-height: 0;
    background: #e6e6e6;
  }

  .canvas {
    flex: 1;
    overflow: hidden;
  }

  .page {
    display: flow-root;
    max-width: 602px;
    min-height: 100%;
    box-sizing: content-box;
    margin: 0 auto;
    padding: 0 95px;
    border: 1px solid #c6c6c6;
    border-width: 0 1px;
    background: #fff;
    color: #000;
    font-family: 'Liberation Serif', serif;
    font-size: 16px;
    line-height: 21px;
  }

  h1 {
    margin: 0 0 19px;
    font-size: 21px;
    line-height: 24px;
    text-align: center;
  }

  h1:first-child {
    margin-top: -4px;
  }

  p {
    margin: 0;
  }

  .intro {
    margin-top: 40px;
  }

  .line {
    display: block;
    white-space: nowrap;
  }

  .full {
    text-align-last: justify;
  }

  .grammar {
    text-decoration: underline dotted #6a5acd 2px;
    text-underline-offset: 3px;
  }

  .task {
    display: flex;
    justify-content: space-between;
    margin: 19px 0;
    padding-right: 47px;
    font-weight: 700;
  }

  figure {
    margin: 16px 0 0;
    text-align: center;
  }

  .circuit {
    display: block;
    margin-left: 42px;
  }

  .signals {
    fill: #444;
    font-size: 11px;
    font-style: italic;
  }

  .signals tspan {
    font-family: 'DejaVu Sans', sans-serif;
    font-size: 11px;
    font-style: normal;
  }

  figcaption {
    margin-top: 16px;
    font-weight: 700;
  }

  .scrollbar {
    display: flex;
    flex-direction: column;
    width: 18px;
    padding: 2px 0;
    box-sizing: border-box;
  }

  .scrollbar button {
    display: flex;
    align-items: center;
    justify-content: center;
    width: 15px;
    height: 15px;
    box-sizing: border-box;
    border: 1px solid #888;
    background: #fff;
    margin-left: 2px;
  }

  .arrow {
    border: 4px solid transparent;
    border-top: 0;
    border-bottom: 4px solid #777;
  }

  .arrow.down {
    transform: rotate(180deg);
  }

  .track {
    position: relative;
    flex: 1;
  }

  .thumb {
    position: absolute;
    top: 35%;
    left: 2px;
    width: 13px;
    height: 38px;
    border: 1px solid #999;
    background: #fff;
  }

  /* status bar */
  .status {
    display: flex;
    align-items: center;
    gap: 19px;
    height: 22px;
    flex: none;
    box-sizing: border-box;
    padding: 0 8px;
    border-top: 1px solid #c8c6c4;
    background: #f3f1ef;
    font-size: 11px;
    white-space: nowrap;
  }

  .with-icon,
  .focus {
    display: flex;
    align-items: center;
    gap: 3px;
  }

  .views {
    display: flex;
    align-items: center;
    margin-left: auto;
  }

  .focus {
    margin-right: 12px;
  }

  .tool.view {
    width: 40px;
    height: 21px;
  }

  .tool.picked {
    background: #d2d0ce;
  }

  .step {
    position: relative;
    width: 7px;
    height: 9px;
    margin: 0 6px;
  }

  .step i,
  .plus::after {
    content: '';
    position: absolute;
    left: 0;
    top: 4px;
    width: 7px;
    height: 1px;
    background: #555;
  }

  .plus::after {
    transform: rotate(90deg);
  }

  input[type='range'] {
    appearance: none;
    width: 100px;
    height: 12px;
    background: linear-gradient(#777, #777) center / 100% 1px no-repeat;
  }

  input[type='range']::-webkit-slider-thumb {
    appearance: none;
    width: 5px;
    height: 11px;
    background: #666;
  }

  .percent {
    margin-left: 7px;
  }

  /* taskbar */
  .taskbar {
    display: flex;
    height: 40px;
    flex: none;
    background: linear-gradient(90deg, #e1cfe5, #e8d5e7 45%, #e3d2d5 55%, #e2d1d1 75%, #ead1d3);
    color: #111;
  }

  .start {
    display: flex;
    align-items: center;
    justify-content: center;
    width: 48px;
  }

  .task-search {
    display: flex;
    align-items: center;
    gap: 11px;
    width: 344px;
    box-sizing: border-box;
    padding-left: 11px;
    border: 1px solid #c9c1c9;
    background: #fff;
    font-size: 14px;
  }

  .task-search input {
    flex: 1;
    min-width: 0;
  }

  .task-search input::placeholder {
    color: #333;
    opacity: 1;
  }

  .pin {
    position: relative;
    display: flex;
    align-items: center;
    justify-content: center;
    width: 49px;
  }

  .running::after {
    content: '';
    position: absolute;
    left: 4px;
    right: 4px;
    bottom: 0;
    height: 2px;
    background: #0078d7;
  }

  .many::after {
    background: linear-gradient(90deg, #0078d7 80%, #6cabdf 80%);
  }

  .current {
    background: #f3ecec;
  }

  .current::after {
    left: 0;
    right: 0;
  }

  .tray {
    display: flex;
    align-items: center;
    gap: 9px;
    margin-left: auto;
    font-size: 11px;
  }

  .weather {
    display: flex;
    align-items: center;
    gap: 10px;
    margin-right: 8px;
    font-size: 13px;
  }

  time {
    margin: 0 8px 0 3px;
    line-height: 18px;
    text-align: center;
  }

  .peek {
    align-self: stretch;
    width: 3px;
    margin-left: 11px;
    border-left: 1px solid #b5a5a6;
  }
</style>
